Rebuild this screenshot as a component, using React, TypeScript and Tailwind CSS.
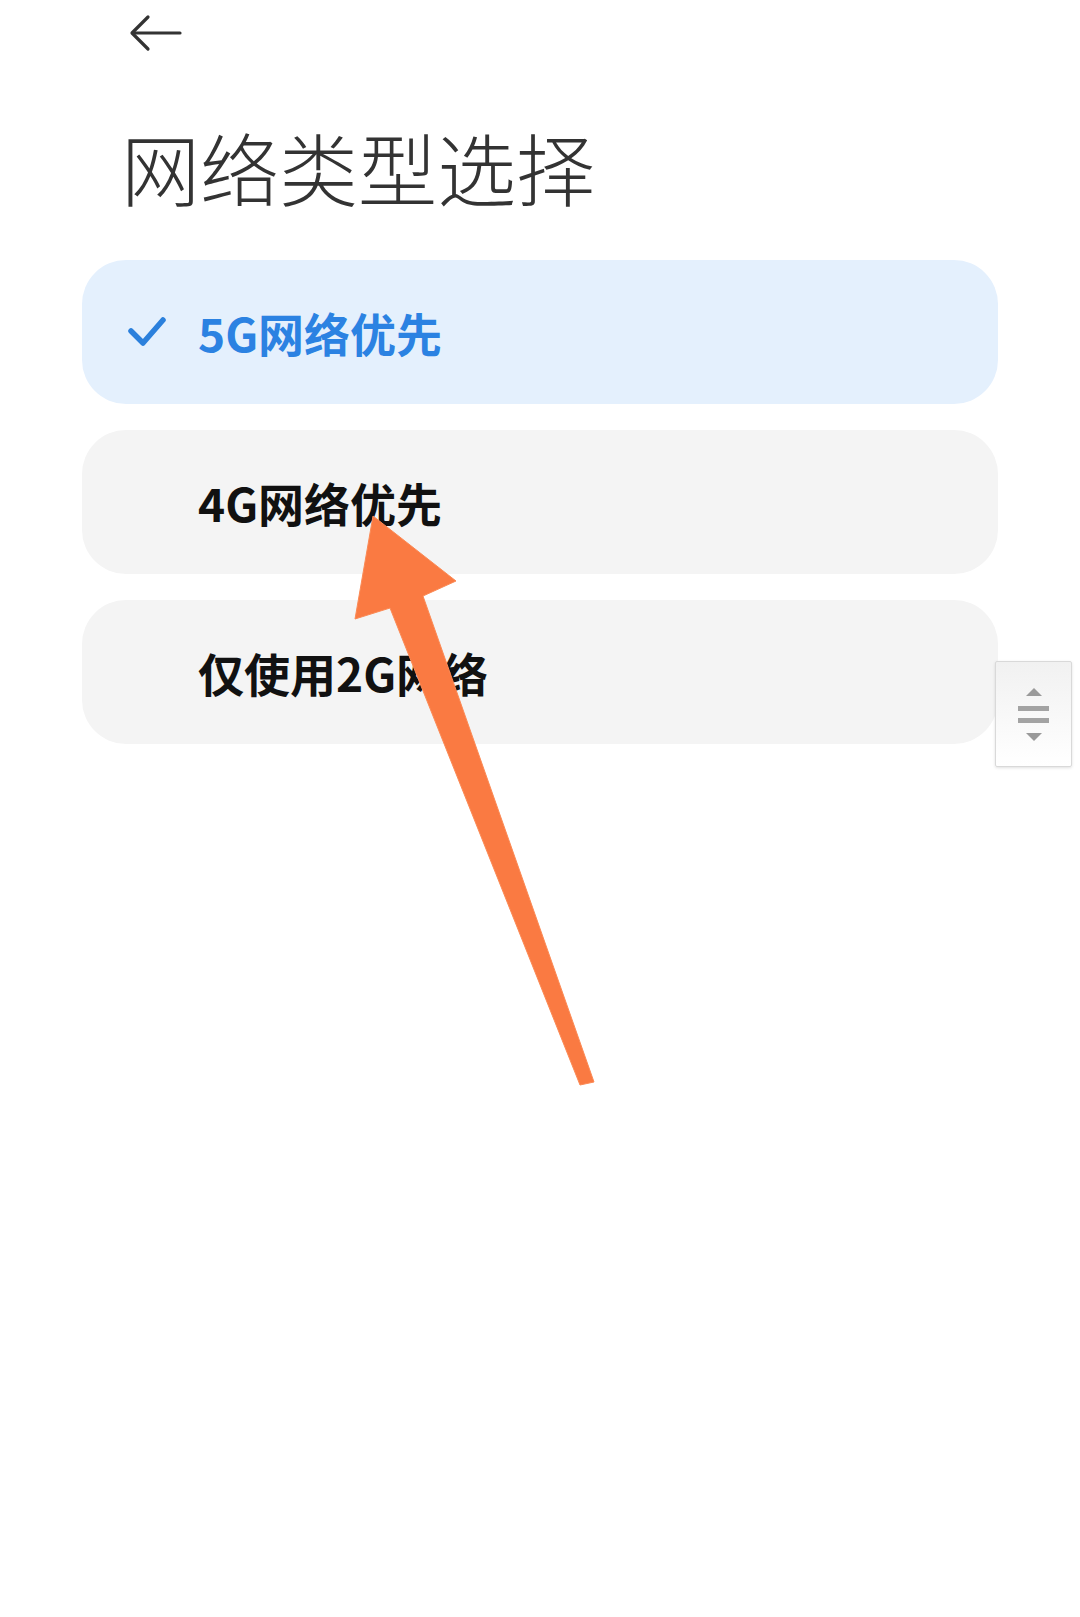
import React, { useState } from 'react';

type Option = {
  id: string;
  label: string;
};

const options: Option[] = [
  { id: '5g', label: '5G网络优先' },
  { id: '4g', label: '4G网络优先' },
  { id: '2g', label: '仅使用2G网络' },
];

const cjk = { fontFamily: '"Noto Sans CJK SC", "Noto Sans", sans-serif' };

function BackArrow() {
  return (
    <svg width="54" height="38" viewBox="0 0 54 38" fill="none" stroke="#333" strokeWidth="3.2" strokeLinecap="round" strokeLinejoin="round">
      <path d="M51 19H4" />
      <path d="M19 3L3 19l16 16" />
    </svg>
  );
}

function Check() {
  return (
    <svg width="40" height="32" viewBox="0 0 40 32" fill="none" stroke="#2b80dc" strokeWidth="5.5" strokeLinecap="round" strokeLinejoin="round">
      <path d="M3 15l12 12L35 4" />
    </svg>
  );
}

function OptionCard({ option, selected, onSelect }: { option: Option; selected: boolean; onSelect: () => void }) {
  return (
    <button
      onClick={onSelect}
      className={`flex h-[144px] w-full items-center rounded-[44px] text-left ${selected ? 'bg-[#e4f0fd]' : 'bg-[#f4f4f4]'}`}
    >
      <span className="flex w-[116px] shrink-0 justify-start pl-[46px]">
        {selected && <Check />}
      </span>
      <span
        style={cjk}
        className={`text-[46px] font-bold leading-none ${selected ? 'text-[#2b82e2]' : 'text-[#111]'}`}
      >
        {option.label}
      </span>
    </button>
  );
}

// little page-scroll handle docked on the right edge
function ScrollHandle() {
  return (
    <div className="absolute left-[995px] top-[661px] flex h-[106px] w-[77px] flex-col items-center justify-center gap-[6px] rounded-[2px] border border-[#d9d9d9] bg-gradient-to-b from-[#f1f1f1] to-white shadow-[0_1px_3px_rgba(0,0,0,0.12)]">
      <div className="h-0 w-0 border-x-[8px] border-b-[8px] border-x-transparent border-b-[#9a9a9a]" />
      <div className="mt-[4px] h-[5px] w-[31px] bg-[#a3a3a3]" />
      <div className="mt-[1px] h-[5px] w-[31px] bg-[#a3a3a3]" />
      <div className="mt-[4px] h-0 w-0 border-x-[8px] border-t-[8px] border-x-transparent border-t-[#9a9a9a]" />
    </div>
  );
}

export default function App() {
  const [selected, setSelected] = useState('5g');

  return (
    <div className="relative min-h-[1617px] w-[1080px] overflow-hidden bg-white">
      <div className="pl-[129px] pt-[14px]">
        <BackArrow />
      </div>

      <h1 style={cjk} className="mt-[75px] pl-[121px] text-[79px] font-light leading-none text-[#333]">
        网络类型选择
      </h1>

      <div className="ml-[82px] mt-[54px] flex w-[916px] flex-col gap-[26px]">
        {options.map((o) => (
          <OptionCard key={o.id} option={o} selected={selected === o.id} onSelect={() => setSelected(o.id)} />
        ))}
      </div>

      <ScrollHandle />

      {/* orange pointer drawn over the list */}
      <svg className="pointer-events-none absolute left-0 top-0" width="1080" height="1617" viewBox="0 0 1080 1617">
        <polygon
          points="373,516 456,581 423,596 594,1082 580,1085 390,608 355,619"
          fill="#fa7a42"
          stroke="#fb8a55"
          strokeWidth="1"
          strokeLinejoin="round"
        />
      </svg>
    </div>
  );
}
